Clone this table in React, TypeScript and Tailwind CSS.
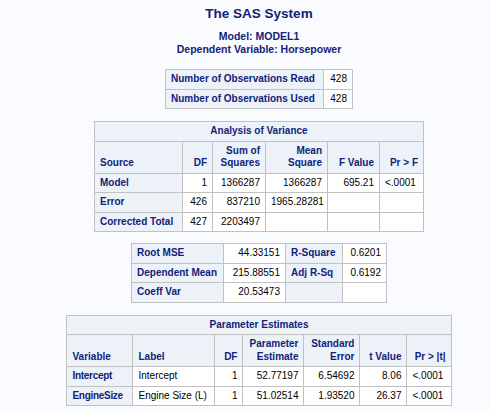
import React from 'react';

const hdr = 'bg-[#edf2f9] text-[#112277] font-bold border border-[#c1c1c1] px-[5px] py-[3px] whitespace-nowrap overflow-hidden';
const cell = 'bg-white text-black border border-[#c1c1c1] px-[5px] py-[3px] whitespace-nowrap overflow-hidden';

const ObsTable = () => (
  <table className="table-fixed border-collapse w-[187px]">
    <colgroup>
      <col className="w-[158px]" />
      <col className="w-[29px]" />
    </colgroup>
    <tbody>
      <tr>
        <th className={`${hdr} text-left`}>Number of Observations Read</th>
        <td className={`${cell} text-right`}>428</td>
      </tr>
      <tr>
        <th className={`${hdr} text-left`}>Number of Observations Used</th>
        <td className={`${cell} text-right`}>428</td>
      </tr>
    </tbody>
  </table>
);

const AnovaTable = () => {
  const rows = [
    ['Model', '1', '1366287', '1366287', '695.21', '<.0001'],
    ['Error', '426', '837210', '1965.28281', '', ''],
    ['Corrected Total', '427', '2203497', '', '', ''],
  ];
  return (
    <table className="table-fixed border-collapse w-[329px]">
      <colgroup>
        <col className="w-[88px]" />
        <col className="w-[30px]" />
        <col className="w-[53px]" />
        <col className="w-[62px]" />
        <col className="w-[52px]" />
        <col className="w-[44px]" />
      </colgroup>
      <thead>
        <tr>
          <th colSpan={6} className={`${hdr} text-center`}>Analysis of Variance</th>
        </tr>
        <tr className="align-bottom">
          <th className={`${hdr} text-left`}>Source</th>
          <th className={`${hdr} text-right`}>DF</th>
          <th className={`${hdr} text-right`}>Sum of<br />Squares</th>
          <th className={`${hdr} text-right`}>Mean<br />Square</th>
          <th className={`${hdr} text-right`}>F Value</th>
          <th className={`${hdr} text-right`}>Pr &gt; F</th>
        </tr>
      </thead>
      <tbody>
        {rows.map((r) => (
          <tr key={r[0]}>
            <th className={`${hdr} text-left`}>{r[0]}</th>
            {r.slice(1).map((v, i) => (
              <td key={i} className={`${cell} ${i === 4 ? 'text-left' : 'text-right'}`}>{v}</td>
            ))}
          </tr>
        ))}
      </tbody>
    </table>
  );
};

const FitTable = () => (
  <table className="table-fixed border-collapse w-[255px]">
    <colgroup>
      <col className="w-[92px]" />
      <col className="w-[62px]" />
      <col className="w-[57px]" />
      <col className="w-[44px]" />
    </colgroup>
    <tbody>
      <tr>
        <th className={`${hdr} text-left`}>Root MSE</th>
        <td className={`${cell} text-right`}>44.33151</td>
        <th className={`${hdr} text-left`}>R-Square</th>
        <td className={`${cell} text-right`}>0.6201</td>
      </tr>
      <tr>
        <th className={`${hdr} text-left`}>Dependent Mean</th>
        <td className={`${cell} text-right`}>215.88551</td>
        <th className={`${hdr} text-left`}>Adj R-Sq</th>
        <td className={`${cell} text-right`}>0.6192</td>
      </tr>
      <tr>
        <th className={`${hdr} text-left`}>Coeff Var</th>
        <td className={`${cell} text-right`}>20.53473</td>
        <th className={hdr}></th>
        <td className={cell}></td>
      </tr>
    </tbody>
  </table>
);

const ParamTable = () => {
  const rows = [
    ['Intercept', 'Intercept', '1', '52.77197', '6.54692', '8.06', '<.0001'],
    ['EngineSize', 'Engine Size (L)', '1', '51.02514', '1.93520', '26.37', '<.0001'],
  ];
  return (
    <table className="table-fixed border-collapse w-[384px]">
      <colgroup>
        <col className="w-[66px]" />
        <col className="w-[82px]" />
        <col className="w-[28px]" />
        <col className="w-[61px]" />
        <col className="w-[56px]" />
        <col className="w-[47px]" />
        <col className="w-[44px]" />
      </colgroup>
      <thead>
        <tr>
          <th colSpan={7} className={`${hdr} text-center`}>Parameter Estimates</th>
        </tr>
        <tr className="align-bottom">
          <th className={`${hdr} text-left`}>Variable</th>
          <th className={`${hdr} text-left`}>Label</th>
          <th className={`${hdr} text-right`}>DF</th>
          <th className={`${hdr} text-right`}>Parameter<br />Estimate</th>
          <th className={`${hdr} text-right`}>Standard<br />Error</th>
          <th className={`${hdr} text-right`}>t Value</th>
          <th className={`${hdr} text-right`}>Pr &gt; |t|</th>
        </tr>
      </thead>
      <tbody>
        {rows.map((r) => (
          <tr key={r[0]}>
            <th className={`${hdr} text-left tracking-[-0.3px]`}>{r[0]}</th>
            <td className={`${cell} text-left`}>{r[1]}</td>
            {r.slice(2).map((v, i) => (
              <td key={i} className={`${cell} ${i === 4 ? 'text-left' : 'text-right'}`}>{v}</td>
            ))}
          </tr>
        ))}
      </tbody>
    </table>
  );
};

export default function App() {
  return (
    <div className="w-[495px] h-[413px] overflow-hidden bg-white">
      <div className="w-[490px] h-[413px] bg-[#fafbfe] overflow-hidden">
        <div className="w-[518px] flex flex-col items-center font-['Liberation_Sans',Arial,sans-serif] text-[10px] leading-[12.5px]">
          <h1 className="mt-[6px] text-[13.5px] leading-[16px] font-bold text-[#112277]">The SAS System</h1>
          <div className="mt-[8px] flex flex-col items-center font-bold text-[#112277] text-[10.5px] leading-[13px]">
            <span>Model: MODEL1</span>
            <span>Dependent Variable: Horsepower</span>
          </div>
          <div className="mt-[13px]">
            <ObsTable />
          </div>
          <div className="mt-[12px]">
            <AnovaTable />
          </div>
          <div className="mt-[11px]">
            <FitTable />
          </div>
          <div className="mt-[12px]">
            <ParamTable />
          </div>
        </div>
      </div>
    </div>
  );
}
